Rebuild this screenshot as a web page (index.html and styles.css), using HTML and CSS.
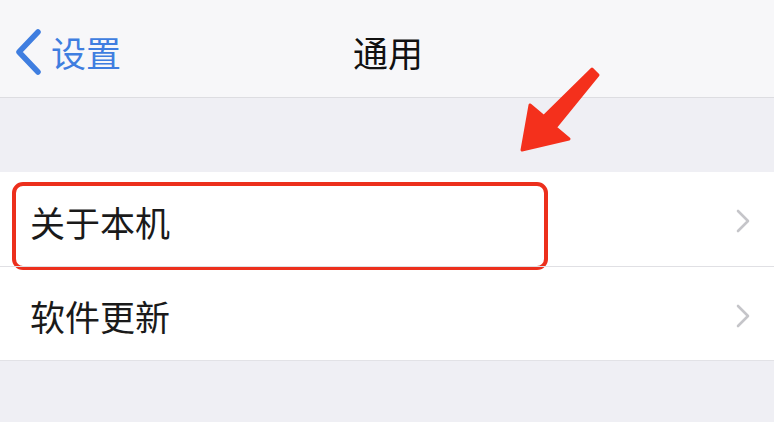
FILE: index.html
```html
<!DOCTYPE html>
<html lang="zh-CN">
<head>
<meta charset="utf-8">
<title>通用</title>
<link rel="stylesheet" href="styles.css">
</head>
<body>
<div class="screen">
  <header class="nav">
    <div class="back">
      <svg class="back-icon" width="30" height="46" viewBox="0 0 30 46"><path d="M25 3 L6 23 L25 43" fill="none" stroke="#3f7ee0" stroke-width="5.5" stroke-linecap="round" stroke-linejoin="round"/></svg>
      <span class="back-text">设置</span>
    </div>
    <div class="title">通用</div>
  </header>
  <div class="gap"></div>
  <ul class="list">
    <li class="row">
      <span class="label">关于本机</span>
      <svg class="chev" width="16" height="26" viewBox="0 0 16 26"><path d="M3 3 L13 13 L3 23" fill="none" stroke="#c5c5c9" stroke-width="2.6" stroke-linecap="round" stroke-linejoin="round"/></svg>
      <div class="highlight"></div>
    </li>
    <li class="row">
      <span class="label">软件更新</span>
      <svg class="chev" width="16" height="26" viewBox="0 0 16 26"><path d="M3 3 L13 13 L3 23" fill="none" stroke="#c5c5c9" stroke-width="2.6" stroke-linecap="round" stroke-linejoin="round"/></svg>
    </li>
  </ul>
  <div class="rest"></div>
  <svg class="arrow" width="774" height="422" viewBox="0 0 774 422"><polygon points="522,150 530,105 543.7,116.5 592,69 598,75 555.3,127.5 569,139" fill="#f4301c" stroke="#f4301c" stroke-width="3" stroke-linejoin="round"/></svg>
</div>
</body>
</html>
```
FILE: styles.css
```css
* { box-sizing: border-box; }
html, body { margin: 0; padding: 0; }
body {
  background: #efeff4;
  font-family: "Noto Sans CJK SC", "Noto Sans", sans-serif;
  width: 774px;
  height: 422px;
  overflow: hidden;
}
.screen { position: relative; width: 774px; height: 422px; }
.nav {
  height: 98px;
  background: #f7f7f9;
  border-bottom: 1px solid #dddde1;
  display: flex;
  align-items: center;
  justify-content: center;
  position: relative;
}
.back {
  position: absolute;
  left: 13px;
  top: 29px;
  display: flex;
  align-items: center;
  gap: 8px;
  color: #3f7ee0;
}
.back-text { font-size: 35px; line-height: 46px; }
.title {
  font-size: 35px;
  color: #111;
  line-height: 46px;
  margin-top: 6px;
  margin-left: 2px;
}
.gap { height: 74px; background: #efeff4; }
.list { list-style: none; margin: 0; padding: 0; background: #fff; border-bottom: 1px solid #e2e2e6; }
.row {
  position: relative;
  height: 94px;
  display: flex;
  align-items: center;
  justify-content: space-between;
  padding: 4px 23px 0 30px;
}
.row + .row { border-top: 1px solid #e0e0e4; height: 94px; }
.label { font-size: 35px; color: #1a1a1a; }
.chev { display: block; }
.highlight {
  position: absolute;
  left: 12px;
  top: 10px;
  width: 536px;
  height: 88px;
  border: 4.5px solid #ec2f1c;
  border-radius: 11px;
}
.rest { height: 64px; background: #efeff4; }
.arrow { position: absolute; left: 0; top: 0; pointer-events: none; }
```
